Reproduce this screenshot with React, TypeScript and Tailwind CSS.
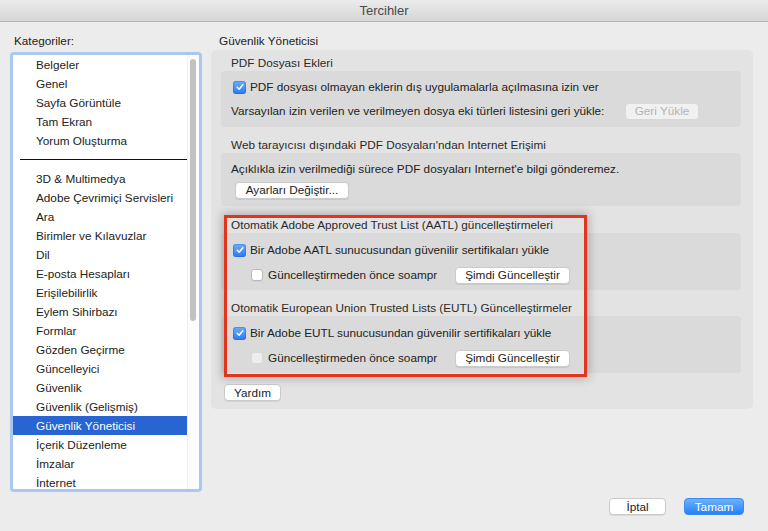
import React from "react";

const topItems = ["Belgeler", "Genel", "Sayfa Görüntüle", "Tam Ekran", "Yorum Oluşturma"];
const restItems = [
  "3D & Multimedya",
  "Adobe Çevrimiçi Servisleri",
  "Ara",
  "Birimler ve Kılavuzlar",
  "Dil",
  "E-posta Hesapları",
  "Erişilebilirlik",
  "Eylem Sihirbazı",
  "Formlar",
  "Gözden Geçirme",
  "Güncelleyici",
  "Güvenlik",
  "Güvenlik (Gelişmiş)",
  "Güvenlik Yöneticisi",
  "İçerik Düzenleme",
  "İmzalar",
  "İnternet",
];

function Checkbox({ checked, faint }: { checked?: boolean; faint?: boolean }) {
  if (checked) {
    return (
      <span className="w-[13px] h-[13px] shrink-0 rounded-[3px] bg-gradient-to-b from-[#6aaff9] to-[#2c78f3] flex items-center justify-center shadow-[inset_0_0_0_1px_rgba(30,90,200,0.35)]">
        <svg viewBox="0 0 12 12" className="w-[10px] h-[10px]">
          <path d="M2.6 6.3 L5 8.6 L9.4 3.3" stroke="white" strokeWidth="1.8" fill="none" strokeLinecap="round" strokeLinejoin="round" />
        </svg>
      </span>
    );
  }
  return (
    <span
      className={
        faint
          ? "w-[12px] h-[12px] shrink-0 rounded-[3px] bg-[#eeeeee] border border-[#d9d9d9]"
          : "w-[12px] h-[12px] shrink-0 rounded-[3px] bg-white border border-[#b9b9b9] shadow-[0_1px_0_rgba(0,0,0,0.05)]"
      }
    />
  );
}

function Button({ children, w }: { children: React.ReactNode; w: string }) {
  return (
    <span className={`${w} h-[17px] shrink-0 bg-white rounded-[4px] border border-[#cbcbcb] shadow-[0_1px_0_rgba(0,0,0,0.08)] flex items-center justify-center text-[#222]`}>
      {children}
    </span>
  );
}

function SectionLabel({ children, h, pt }: { children: React.ReactNode; h: string; pt: string }) {
  return <div className={`${h} ${pt} pl-[10px] leading-[16px] text-[#2a2a2a]`}>{children}</div>;
}

export default function App() {
  return (
    <div className="w-[768px] h-[531px] bg-[#ececec] flex flex-col overflow-hidden font-['Liberation_Sans',Arial,sans-serif] text-[11.75px] text-[#222]">
      {/* title bar */}
      <div className="h-[22px] shrink-0 bg-gradient-to-b from-[#ececec] to-[#d5d5d5] border-b border-[#b3b3b3] flex items-center justify-center text-[13px] text-[#4a4a4a]">
        Tercihler
      </div>

      <div className="flex pl-[10px] pt-[11px]">
        {/* categories */}
        <div className="w-[192px] shrink-0 flex flex-col">
          <div className="h-[16px] leading-[16px] pl-[4px]">Kategoriler:</div>
          <div className="mt-[3px] h-[440px] border-[3px] border-[#a8c7f1] rounded-[4px] bg-white flex overflow-hidden">
            <div className="w-[174px] shrink-0 flex flex-col">
              {topItems.map((t) => (
                <div key={t} className="h-[19px] shrink-0 leading-[19px] pl-[23px]">
                  {t}
                </div>
              ))}
              <div className="h-[19px] shrink-0 flex items-center pl-[7px]">
                <div className="h-px w-full bg-[#111]" />
              </div>
              {restItems.map((t) => (
                <div
                  key={t}
                  className={
                    t === "Güvenlik Yöneticisi"
                      ? "h-[19px] shrink-0 leading-[19px] pl-[23px] bg-[#2864d2] text-white"
                      : "h-[19px] shrink-0 leading-[19px] pl-[23px]"
                  }
                >
                  {t}
                </div>
              ))}
            </div>
            <div className="flex-1 border-l border-[#f0f0f0] bg-[#fcfcfc] pt-[4px]">
              <div className="ml-[2px] w-[6px] h-[262px] rounded-full bg-[#c2c2c2]" />
            </div>
          </div>
        </div>

        {/* security manager */}
        <div className="ml-[9px] w-[542px] shrink-0 flex flex-col">
          <div className="h-[16px] leading-[16px] pl-[8px]">Güvenlik Yöneticisi</div>
          <div className="relative mt-[1px] bg-[#e3e3e3] rounded-[5px] pl-[10px] pr-[12px] pb-[8px] flex flex-col">
            <SectionLabel h="h-[21px]" pt="pt-[5px]">PDF Dosyası Ekleri</SectionLabel>
            <div className="bg-[#dadada] rounded-[4px] pl-[10px] pt-[7px] pb-[7px] flex flex-col gap-[6px]">
              <div className="h-[18px] flex items-center pl-[2px] gap-[4px]">
                <Checkbox checked />
                <span>PDF dosyası olmayan eklerin dış uygulamalarla açılmasına izin ver</span>
              </div>
              <div className="h-[18px] flex items-center">
                <span className="w-[394px] shrink-0">Varsayılan izin verilen ve verilmeyen dosya eki türleri listesini geri yükle:</span>
                <span className="w-[74px] h-[17px] bg-[#f1f1f1] rounded-[4px] border border-[#d8d8d8] flex items-center justify-center text-[#b3b3b3]">
                  Geri Yükle
                </span>
              </div>
            </div>

            <SectionLabel h="h-[26px]" pt="pt-[10px]">Web tarayıcısı dışındaki PDF Dosyaları'ndan Internet Erişimi</SectionLabel>
            <div className="bg-[#dadada] rounded-[4px] pl-[10px] pt-[7px] pb-[7px] flex flex-col gap-[3px]">
              <div className="h-[18px] flex items-center">
                Açıklıkla izin verilmediği sürece PDF dosyaları Internet'e bilgi gönderemez.
              </div>
              <div className="h-[18px] flex items-center pl-[4px]">
                <Button w="w-[114px]">Ayarları Değiştir...</Button>
              </div>
            </div>

            <SectionLabel h="h-[27px]" pt="pt-[11px]">Otomatik Adobe Approved Trust List (AATL) güncelleştirmeleri</SectionLabel>
            <div className="bg-[#dadada] rounded-[4px] pl-[10px] pt-[8px] pb-[6px] flex flex-col gap-[7px]">
              <div className="h-[18px] flex items-center pl-[2px] gap-[4px]">
                <Checkbox checked />
                <span>Bir Adobe AATL sunucusundan güvenilir sertifikaları yükle</span>
              </div>
              <div className="h-[18px] flex items-center pl-[20px] gap-[5px]">
                <Checkbox />
                <span className="w-[182px] shrink-0">Güncelleştirmeden önce soampr</span>
                <Button w="w-[115px]">Şimdi Güncelleştir</Button>
              </div>
            </div>

            <SectionLabel h="h-[26px]" pt="pt-[10px]">Otomatik European Union Trusted Lists (EUTL) Güncelleştirmeler</SectionLabel>
            <div className="bg-[#dadada] rounded-[4px] pl-[10px] pt-[8px] pb-[6px] flex flex-col gap-[7px]">
              <div className="h-[18px] flex items-center pl-[2px] gap-[4px]">
                <Checkbox checked />
                <span>Bir Adobe EUTL sunucusundan güvenilir sertifikaları yükle</span>
              </div>
              <div className="h-[18px] flex items-center pl-[20px] gap-[5px]">
                <Checkbox faint />
                <span className="w-[182px] shrink-0">Güncelleştirmeden önce soampr</span>
                <Button w="w-[115px]">Şimdi Güncelleştir</Button>
              </div>
            </div>

            <div className="mt-[11px] h-[17px] flex pl-[3px]">
              <Button w="w-[57px]">Yardım</Button>
            </div>

            {/* annotation frame */}
            <div className="absolute left-[13px] top-[165px] w-[363px] h-[162px] border-[3px] border-[#e2351d] shadow-[0_0_9px_2px_rgba(0,0,0,0.22)] pointer-events-none" />
          </div>
        </div>
      </div>

      <div className="mt-[6px] flex justify-end pr-[24px] gap-[18px]">
        <Button w="w-[57px]">İptal</Button>
        <span className="w-[60px] h-[17px] rounded-[4px] bg-gradient-to-b from-[#6db2fb] to-[#1f80f8] border border-[#3c8af3] flex items-center justify-center text-white">
          Tamam
        </span>
      </div>
    </div>
  );
}
